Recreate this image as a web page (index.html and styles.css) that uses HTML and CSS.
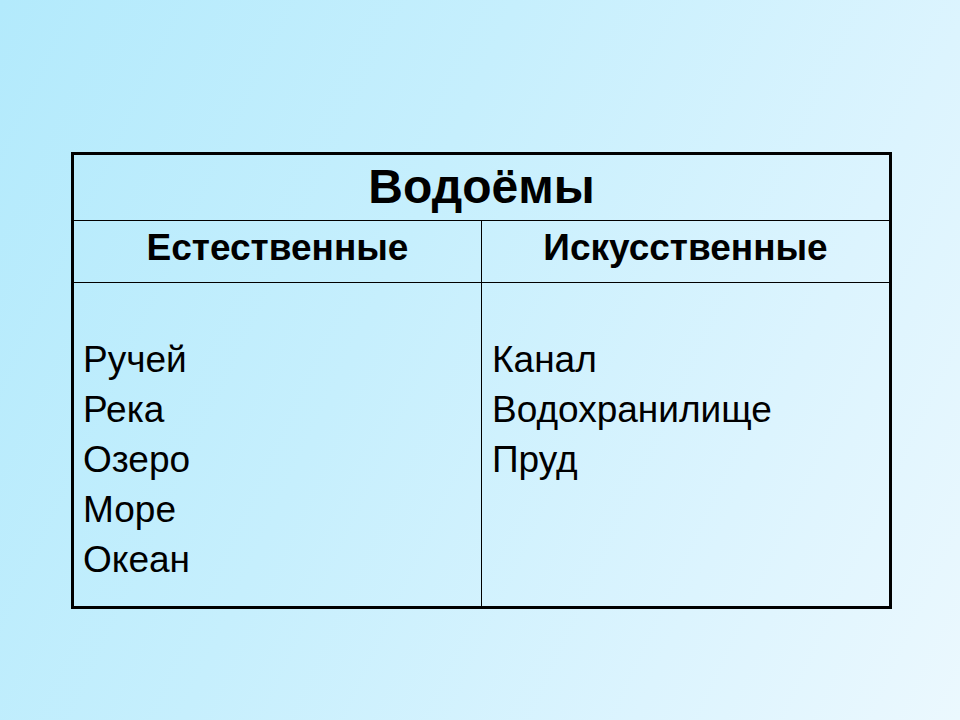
FILE: index.html
```html
<!DOCTYPE html>
<html lang="ru">
<head>
<meta charset="utf-8">
<title>Водоёмы</title>
<link rel="stylesheet" href="styles.css">
</head>
<body>
<div class="slide">
  <div class="table">
    <div class="cell title">Водоёмы</div>
    <div class="cell head head-left">Естественные</div>
    <div class="cell head">Искусственные</div>
    <div class="cell body body-left">
      <div class="line">Ручей</div>
      <div class="line">Река</div>
      <div class="line">Озеро</div>
      <div class="line">Море</div>
      <div class="line">Океан</div>
    </div>
    <div class="cell body body-right">
      <div class="line">Канал</div>
      <div class="line">Водохранилище</div>
      <div class="line">Пруд</div>
    </div>
  </div>
</div>
</body>
</html>
```

FILE: styles.css
```css
html, body {
  margin: 0;
  padding: 0;
}

body {
  width: 960px;
  height: 720px;
  overflow: hidden;
  font-family: "Liberation Sans", Arial, sans-serif;
  color: #000;
}

.slide {
  width: 960px;
  height: 720px;
  box-sizing: border-box;
  padding: 152px 0 0 71px;
  background: linear-gradient(115deg, #b3eafc 0%, #c6effd 40%, #dcf4fe 75%, #ebf8fe 100%);
}

.table {
  width: 821px;
  height: 457px;
  box-sizing: border-box;
  border: 3px solid #000;
  display: grid;
  grid-template-columns: 408px 1fr;
  grid-template-rows: 66px 62px 323px;
}

.cell {
  box-sizing: border-box;
}

.title {
  grid-column: 1 / 3;
  border-bottom: 1px solid #000;
  text-align: center;
  font-weight: bold;
  font-size: 48px;
  line-height: 64px;
}

.head {
  border-bottom: 1px solid #000;
  text-align: center;
  font-weight: bold;
  font-size: 37px;
  line-height: 53px;
}

.head-left,
.body-left {
  border-right: 1px solid #000;
}

.body {
  font-size: 37px;
  line-height: 50px;
  padding-top: 52px;
}

.body-left {
  padding-left: 9px;
}

.body-right {
  padding-left: 10px;
}
```
